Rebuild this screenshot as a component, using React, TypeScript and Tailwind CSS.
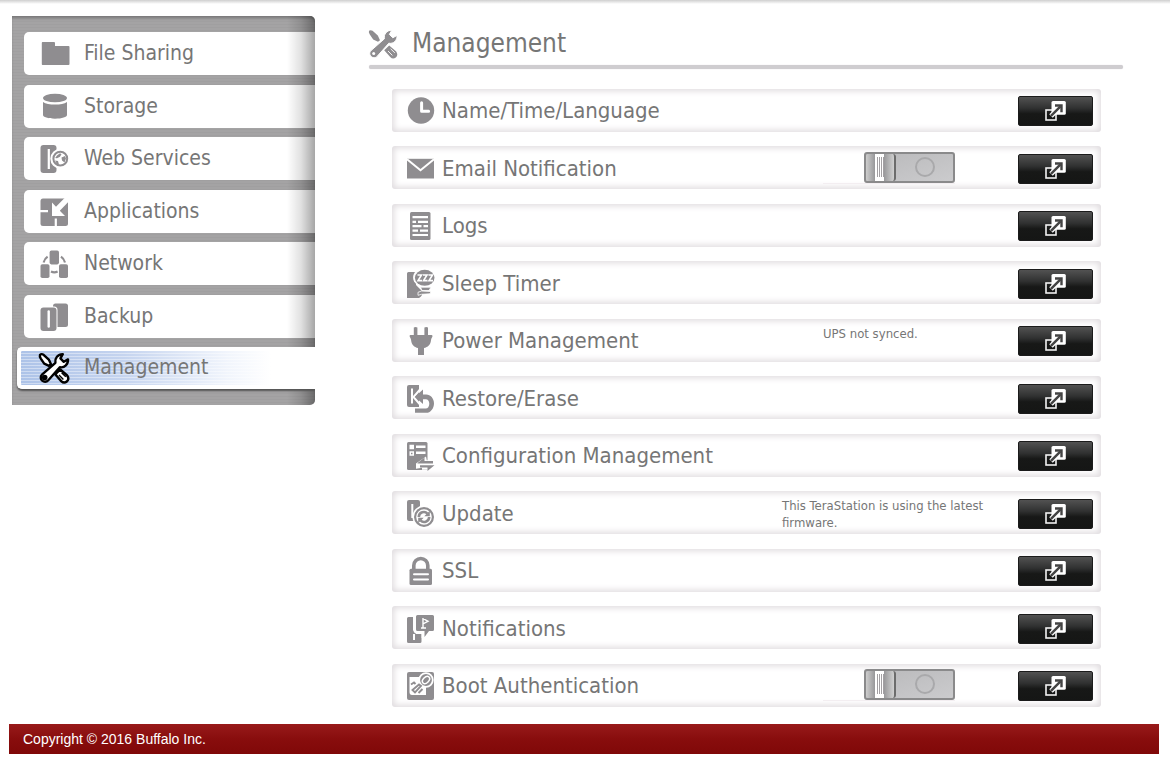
import React, { type ReactNode } from "react";

const G = "#8f8d90";

function Icon({ children }: { children: ReactNode }) {
  return (
    <svg aria-hidden="true" viewBox="0 0 28 28" width="28" height="28" fill="none" className="size-7 shrink-0 overflow-visible">
      {children}
    </svg>
  );
}

const FolderIcon = () => (
  <Icon>
    <path d="M2.500 2H14q1 0 1 1v3h13.500q1 0 1 1v17q0 1-1 1h-26q-.7 0-.7-1V3q0-1 .7-1z" fill={G} />
  </Icon>
);
const StorageIcon = () => (
  <Icon>
    <ellipse cx="15" cy="5" rx="12" ry="4.300" fill={G} />
    <path d="M3 9q4 2.600 12 2.600T27 9V22c0 2-5 3.700-12 3.700S3 24 3 22z" fill={G} />
  </Icon>
);
const WebIcon = () => (
  <Icon>
    <rect x=".5" width="16" height="28" rx="3" fill={G} />
    <path d="M8.800 4v20" stroke="#fff" strokeWidth="2.200" />
    <circle cx="20.300" cy="13.700" r="10" fill="#fff" />
    <circle cx="20.300" cy="13.700" r="6.900" stroke={G} strokeWidth="2" />
    <path d="M17 10.500l3-2.300 1.500 1-1.500 2.600-3 1.500-1.800-.3zM21.500 12.500l3.500-1.500 1 2.500-1.500 4-2.500-2zM15 15.500l3 .5 1 3.500-2-.3z" fill={G} />
  </Icon>
);
const AppsIcon = () => (
  <Icon>
    <rect x=".5" y=".5" width="27.500" height="27.500" rx="2.500" fill={G} />
    <path d="M12 18V4.500l4 4.200L24.600 0H28v4.200L19.800 12.800 25 18zM0 12h8v2.200H0zM14.700 20.500h2.200V28h-2.200z" fill="#fff" />
  </Icon>
);
const NetworkIcon = () => (
  <Icon>
    <rect x="9.600" y=".6" width="9.400" height="13.800" rx="1.800" fill={G} />
    <rect x=".5" y="14.200" width="9" height="13.800" rx="1.800" fill={G} />
    <rect x="19" y="14.200" width="9" height="13.800" rx="1.800" fill={G} />
    <path d="M3.600 12.500q1-3.800 4-5.800M25 12.500q-1-3.800-4-5.800M11 21.500q3.300 1.600 6.600 0" stroke={G} strokeWidth="2.200" />
  </Icon>
);
const BackupIcon = () => (
  <Icon>
    <rect x="13" y=".5" width="15" height="23.500" rx="2.500" fill={G} />
    <rect x="0" y="3.500" width="17.500" height="25" rx="3.500" fill="#fff" />
    <rect x=".5" y="4.500" width="16" height="23.500" rx="3" fill={G} />
    <path d="M8.700 8.500v15" stroke="#fff" strokeWidth="2.400" strokeLinecap="round" />
  </Icon>
);
const ToolsIcon = ({ active = false }: { active?: boolean }) => {
  const wrench =
    "M2 20.600L15.400 8.800C14.600 4.300 17.800.2 22.800.2L20.400 4.400l3.400 3.400L28 5.400c.4 4.800-3.400 8.800-8.200 7.800L8.300 26.200c-3.800 4.400-10.300-1.400-6.300-5.600z";
  const driver =
    "M0 .8q1.500-1.300 3.600 0l5.200 4.800 2.200 4.600-2 1.600-4.800-2.200L.8 4.600Q-.6 2.400 0 .8zM15.200 20.300l5-4.800 7 6q2.400 3.600-.4 6t-5.600-.4z";
  const outline = active ? "#000" : "#fff";
  const body = active ? "#fff" : G;
  return (
    <Icon>
      <path d={driver} fill={body} stroke={active ? outline : "none"} strokeWidth="2.400" strokeLinejoin="round" />
      <path d="M19 21l4.400 4.400M21.600 18.800l4.200 4" stroke={outline} strokeWidth={active ? 1.4 : 0.9} />
      <path d={wrench} fill={body} stroke={outline} strokeWidth={active ? 2.4 : 1} strokeLinejoin="round" />
      <circle cx="4.700" cy="23.600" r={active ? 2.8 : 1.5} fill={outline} />
    </Icon>
  );
};
const ClockIcon = () => (
  <Icon>
    <circle cx="15" cy="13.500" r="13.200" fill={G} />
    <path d="M15.600 5.800v8.400H22.600" stroke="#fff" strokeWidth="3" strokeLinecap="round" strokeLinejoin="round" />
  </Icon>
);
const MailIcon = () => (
  <Icon>
    <path d="M1 3.800h27v19.700H1z" fill={G} />
    <path d="M1 4.200l13.500 11L28 4.200" stroke="#fff" strokeWidth="2" />
  </Icon>
);
const LogsIcon = () => (
  <Icon>
    <rect x="4" width="20.500" height="28" rx="1.500" fill={G} />
    <path d="M6.500 5.200H22M6.500 9.800H10M12 9.800h10M6.500 14.200h9M17.500 14.200H22M6.500 18.600H12M14 18.600h8M6.500 23H22" stroke="#fff" strokeWidth="2.200" />
  </Icon>
);
const SleepIcon = () => (
  <Icon>
    <path d="M1 3.500q0-1.500 1.500-1.500H10v13l6 6v4q-1 2-3 3H1z" fill={G} />
    <ellipse cx="18.700" cy="7.500" rx="11.600" ry="9.600" fill="#fff" />
    <ellipse cx="18.700" cy="7.800" rx="9.800" ry="8" fill={G} />
    <path d="M11.500 5h4l-3.500 5.600h4M17 5h4l-3.500 5.600h4M22.500 5h4L23 10.600h4" stroke="#fff" strokeWidth="1.600" />
    <path d="M14.500 17.200h10.500l-2 3.300h-7zM12 22.300l3.500-1.300 9.500.5-1 2.300-8.500.5-3.500 1z" fill={G} stroke="#fff" strokeWidth=".8" />
  </Icon>
);
const PlugIcon = () => (
  <Icon>
    <path d="M7.800.5q1.800-1 3.600 0V8h7V.5q1.800-1 3.600 0V8h3.500q1 0 1 1.200c-.4 1.600-1.300 2-1.500 4-.3 4.400-3.300 7-7 7.800v7h-6v-7c-3.700-.8-6.500-3.400-6.900-7.800-.2-2-1-2.400-1.500-4Q3.500 8 4.500 8h3.300z" fill={G} />
  </Icon>
);
const RestoreIcon = () => (
  <Icon>
    <path d="M1 2Q1 0 3 0h10v22H3q-2 0-2-2z" fill={G} />
    <path d="M6 3.500v15M17 1L7.500 12 17 23" stroke="#fff" strokeWidth="2" />
    <path d="M9 11.800l8-7.200V9.500h3.200c4.300 0 7.800 3.900 7.800 8.900s-3.500 9.400-7.800 9.400H9v-4.200h10.700c2.200 0 3.600-2.200 3.600-4.800s-1.400-4.500-3.600-4.500H17v4.700z" fill={G} />
  </Icon>
);
const ConfigIcon = () => (
  <Icon>
    <path d="M2.500 0H20q1.500 0 1.500 1.500V28h-19Q1 28 1 26.500v-25Q1 0 2.500 0z" fill={G} />
    <path d="M3.500 2.800H8v4.500H3.500zM3.500 9.300H8v4.500H3.500zM10 3.500h9.500v2.600H10zM10 9.500h9.500v2.600H10z" fill="#fff" />
    <path d="M5 10.700h1.500v1.600H5z" fill={G} />
    <path d="M10 21.500L20 14.500l.8 3.800H29v9.400H16v-2l-6 1z" fill="#fff" />
    <path d="M11.500 20.900l7-5.400v3.500h8.500v2.600H11.500zM28.500 23.200H14v2.400h7.500V29z" fill={G} />
  </Icon>
);
const UpdateIcon = () => (
  <Icon>
    <path d="M1 2Q1 0 3 0h9q2 0 2 2v19H3q-2 0-2-2z" fill={G} />
    <path d="M6.300 4v14" stroke="#fff" strokeWidth="2" />
    <circle cx="18" cy="17" r="11.500" fill="#fff" />
    <circle cx="18" cy="17" r="8.900" stroke={G} strokeWidth="2.200" />
    <path d="M12.800 17c.2-5 6-6.300 8.600-3.300M23.200 17c-.2 5-6 6.300-8.600 3.300" stroke={G} strokeWidth="2.600" />
    <path d="M23.800 10.700v5.600h-5.500zM12.200 23.300v-5.600h5.500z" fill={G} />
  </Icon>
);
const LockIcon = () => (
  <Icon>
    <path d="M7.800 13V8.500a7 7 0 0 1 14 0V13" stroke={G} strokeWidth="3.600" />
    <rect x="3.500" y="11.800" width="22.500" height="16.200" rx="1.500" fill={G} />
    <path d="M8 17.300h14M8 22.500h14" stroke="#fff" strokeWidth="2" strokeLinecap="round" />
  </Icon>
);
const NotifyIcon = () => (
  <Icon>
    <path d="M1 3.500Q1 2 2.500 2H7v13l3 4h5.500v7.500q0 1.500-1.500 1.500H2.500Q1 28 1 26.500z" fill={G} />
    <path d="M8 19v6" stroke="#fff" strokeWidth="2" />
    <path d="M11.500 0H26.500Q28 0 28 1.500v13q0 1.500-1.500 1.500H23l-4.500 6v-6h-7Q10 16 10 14.500v-13Q10 0 11.500 0z" fill={G} />
    <path d="M8.400 1v14.500q0 2 2 2h6V23" stroke="#fff" strokeWidth="1.600" />
    <path d="M17 3v10M17 3.500l5 2.800-5 2.500M15 13h5" stroke="#fff" strokeWidth="1.400" />
  </Icon>
);
const BootIcon = () => (
  <Icon>
    <rect x="1" width="27" height="28" rx="2" fill={G} />
    <path d="M3.500 5H14v7h6v11H6q-2.500 0-2.500-3z" fill="#fff" />
    <circle cx="20" cy="8" r="6.800" fill={G} stroke="#fff" strokeWidth="1.800" />
    <ellipse cx="20" cy="8" rx="4.200" ry="2.800" stroke="#fff" strokeWidth="1.500" transform="rotate(-45 20 8)" />
    <path d="M5 12.500l3-2 1.500 1.500M6.500 18l6.500-5.500 2 1.500-6 6.500zM12.500 21l4-4" stroke={G} strokeWidth="1.900" />
  </Icon>
);

const PopOutIcon = () => (
  <svg aria-hidden="true" viewBox="0 0 21 20" width="21" height="20" fill="none" className="shrink-0">
    <rect x="1" y="9" width="10" height="10" stroke="#f2f2f2" strokeWidth="1.600" />
    <rect x="6.500" y="0" width="14.300" height="13.800" rx="1.500" fill="#fff" />
    <path d="M6 15l9-9" stroke="#fff" strokeWidth="5" />
    <path d="M6 14.800L15.500 5.300" stroke="#444" strokeWidth="2.400" />
    <path d="M10 4.500h6.500v6.800" stroke="#444" strokeWidth="2.400" />
  </svg>
);

const nav = [
  { label: "File Sharing", icon: <FolderIcon /> },
  { label: "Storage", icon: <StorageIcon /> },
  { label: "Web Services", icon: <WebIcon /> },
  { label: "Applications", icon: <AppsIcon /> },
  { label: "Network", icon: <NetworkIcon /> },
  { label: "Backup", icon: <BackupIcon /> },
  { label: "Management", icon: <ToolsIcon active />, active: true },
];

function Switch({ label }: { label: string }) {
  return (
    <label className="mb-[3px] ml-[41px] flex w-[132px] cursor-pointer justify-end border-b border-[#f3eef1]">
      <input type="checkbox" role="switch" aria-label={label} className="sr-only" />
      <span className="flex h-[31px] w-[91px] overflow-hidden rounded-[3px] border-2 border-[#8a8a8b] bg-linear-to-br from-[#b9b9bb] to-[#cbcbcd]">
        <span className="flex w-[30px] items-center justify-center rounded-[3px] border-r-2 border-[#6c6c6c] bg-[linear-gradient(90deg,#cdcdcd,#98989a_32%,#fff_32%,#fff_64%,#98989a_64%,#d0d0d0)]">
          <span className="flex gap-px">
            <span className="h-5 w-px bg-[#a3a0a3]" />
            <span className="h-5 w-px bg-[#a3a0a3]" />
            <span className="h-5 w-px bg-[#a3a0a3]" />
            <span className="h-5 w-px bg-[#a3a0a3]" />
          </span>
        </span>
        <span className="flex flex-1 items-center justify-center">
          <span className="size-5 rounded-full border-2 border-[#a9a9ab]" />
        </span>
      </span>
    </label>
  );
}

const rows: { label: string; icon: ReactNode; status?: ReactNode }[] = [
  { label: "Name/Time/Language", icon: <ClockIcon /> },
  { label: "Email Notification", icon: <MailIcon />, status: <Switch label="Email Notification" /> },
  { label: "Logs", icon: <LogsIcon /> },
  { label: "Sleep Timer", icon: <SleepIcon /> },
  { label: "Power Management", icon: <PlugIcon />, status: <p className="mb-4 ml-[41px]">UPS not synced.</p> },
  { label: "Restore/Erase", icon: <RestoreIcon /> },
  { label: "Configuration Management", icon: <ConfigIcon /> },
  { label: "Update", icon: <UpdateIcon />, status: <p>This TeraStation is using the latest firmware.</p> },
  { label: "SSL", icon: <LockIcon /> },
  { label: "Notifications", icon: <NotifyIcon /> },
  { label: "Boot Authentication", icon: <BootIcon />, status: <Switch label="Boot Authentication" /> },
];

export default function App() {
  return (
    <div className="bg-white font-['DejaVu_Sans_Condensed','DejaVu_Sans',sans-serif] text-[#767676]">
      <div className="h-1 bg-linear-to-b from-[#cfcfcf] to-white" />
      <div className="flex items-start pt-3 pl-3">
        <nav className="relative w-[303px] shrink-0 overflow-hidden rounded-r-[5px] bg-[repeating-linear-gradient(180deg,#a4a3a4_0px,#a4a3a4_2px,#a09fa0_2px,#a09fa0_3px)] pt-4 pb-[6px] shadow-[inset_0_3px_3px_-1px_#777]">
          <div className="pointer-events-none absolute inset-y-0 right-0 z-10 w-7 bg-linear-to-r from-transparent via-black/12 to-black/35" />
          <ul>
            {nav.map((n) => (
              <li key={n.label} className="odd:mb-[10px] even:mb-[9px]">
                {n.active ? (
                  <a
                    href="#"
                    aria-current="page"
                    className="relative z-20 ml-[5px] flex h-[42px] items-center gap-[16px] rounded-l-[5px] border-4 border-r-0 border-white bg-[repeating-linear-gradient(180deg,transparent_0px,transparent_2px,#ffffff66_2px,#ffffff66_3px),linear-gradient(90deg,#adc3e8,#c5d4ef_35%,#f1f5fc_70%,#fff_85%)] pl-[19px] text-[21px] shadow-[0_2px_2px_#555]"
                  >
                    {n.icon}
                    <span>{n.label}</span>
                  </a>
                ) : (
                  <a href="#" className="ml-3 flex h-[43px] items-center gap-[16px] rounded-l-[5px] bg-white pl-4 text-[21px]">
                    {n.icon}
                    <span>{n.label}</span>
                  </a>
                )}
              </li>
            ))}
          </ul>
        </nav>

        <main className="mr-[47px] ml-[54px] min-w-0 flex-1 pt-3">
          <h1 className="flex h-[31px] items-center gap-[15px] text-[26px]">
            <ToolsIcon />
            <span>Management</span>
          </h1>
          <div className="mt-[6px] h-1 rounded-full bg-[#cfcdd0] shadow-[0_0_1px_#cfcdd0]" />
          <ul className="mt-5 mr-[22px] ml-[23px]">
            {rows.map((r) => (
              <li
                key={r.label}
                className="flex h-[43px] items-center rounded-[3px] pr-2 pl-[14px] shadow-[inset_0_0_6px_2px_#dfdbde] odd:mb-[14px] odd:pt-px even:mb-[15px] even:pt-[3px]"
              >
                {r.icon}
                <h2 className="ml-2 flex-1 text-[22px] leading-7">{r.label}</h2>
                {r.status && <div className="mr-[24px] w-[212px] shrink-0 text-[13px] leading-[17px]">{r.status}</div>}
                <button
                  type="button"
                  aria-label={`Open ${r.label}`}
                  className="flex h-[30px] w-[75px] shrink-0 items-center justify-center rounded-[2px] border border-[#1b1b1b] bg-[linear-gradient(180deg,#525252,#303131_40%,#171817_60%,#151615)]"
                >
                  <PopOutIcon />
                </button>
              </li>
            ))}
          </ul>
        </main>
      </div>
      <footer className="mt-[3px] mr-[11px] mb-1 ml-[9px] flex h-[30px] items-center bg-linear-to-b from-[#981a1a] via-[#880d0d] to-[#800808] pl-[14px] font-['Liberation_Sans',sans-serif] text-sm text-white">
        Copyright © 2016 Buffalo Inc.
      </footer>
    </div>
  );
}
